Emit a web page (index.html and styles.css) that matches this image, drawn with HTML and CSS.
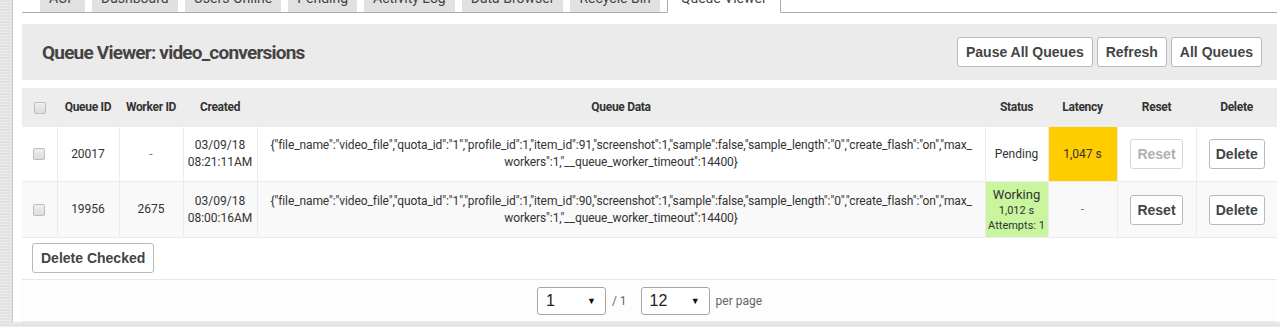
FILE: index.html
```html
<!DOCTYPE html>
<html lang="en">
<head>
    <meta charset="UTF-8">
    <meta name="viewport" content="width=device-width, initial-scale=1.0">
    <title>Queue Viewer</title>
    <link rel="stylesheet" href="styles.css">
</head>
<body>
    <div class="page">
        <ul class="tabs">
            <li><a href="#">ACP</a></li>
            <li><a href="#">Dashboard</a></li>
            <li><a href="#">Users Online</a></li>
            <li><a href="#">Pending</a></li>
            <li><a href="#">Activity Log</a></li>
            <li><a href="#">Data Browser</a></li>
            <li><a href="#">Recycle Bin</a></li>
            <li class="active"><a href="#">Queue Viewer</a></li>
        </ul>

        <div class="panel-heading">
            <h2>Queue Viewer: video_conversions</h2>
            <div class="actions">
                <button class="btn">Pause All Queues</button>
                <button class="btn">Refresh</button>
                <button class="btn">All Queues</button>
            </div>
        </div>

        <table class="queue">
            <colgroup>
                <col class="col-check">
                <col class="col-id">
                <col class="col-worker">
                <col class="col-created">
                <col>
                <col class="col-status">
                <col class="col-latency">
                <col class="col-reset">
                <col class="col-delete">
            </colgroup>
            <thead>
                <tr>
                    <th><input type="checkbox" class="check"></th>
                    <th>Queue ID</th>
                    <th>Worker ID</th>
                    <th>Created</th>
                    <th>Queue Data</th>
                    <th>Status</th>
                    <th>Latency</th>
                    <th>Reset</th>
                    <th>Delete</th>
                </tr>
            </thead>
            <tbody>
                <tr>
                    <td><input type="checkbox" class="check"></td>
                    <td>20017</td>
                    <td class="muted">-</td>
                    <td>03/09/18<br>08:21:11AM</td>
                    <td class="data">{"file_name":"video_file","quota_id":"1","profile_id":1,"item_id":91,"screenshot":1,"sample":false,"sample_length":"0","create_flash":"on","max_<br>workers":1,"__queue_worker_timeout":14400}</td>
                    <td>Pending</td>
                    <td class="late">1,047 s</td>
                    <td><button class="btn" disabled>Reset</button></td>
                    <td><button class="btn">Delete</button></td>
                </tr>
                <tr class="alt">
                    <td><input type="checkbox" class="check"></td>
                    <td>19956</td>
                    <td>2675</td>
                    <td>03/09/18<br>08:00:16AM</td>
                    <td class="data">{"file_name":"video_file","quota_id":"1","profile_id":1,"item_id":90,"screenshot":1,"sample":false,"sample_length":"0","create_flash":"on","max_<br>workers":1,"__queue_worker_timeout":14400}</td>
                    <td class="working">
                        <div>Working</div>
                        <div class="small">1,012 s</div>
                        <div class="small">Attempts: 1</div>
                    </td>
                    <td class="muted">-</td>
                    <td><button class="btn">Reset</button></td>
                    <td><button class="btn">Delete</button></td>
                </tr>
            </tbody>
        </table>

        <div class="bulk">
            <button class="btn">Delete Checked</button>
        </div>

        <div class="pager">
            <span class="select">1</span>
            <span class="of">/ 1</span>
            <span class="select">12</span>
            <span class="of">per page</span>
        </div>
    </div>
</body>
</html>
```

FILE: styles.css
```css
html, body {
    height: 100%;
}

body {
    margin: 0;
    overflow: hidden;
    font-family: Roboto, "Liberation Sans", sans-serif;
    color: #333;
    background-color: #e2e2e2;
    background-image: repeating-linear-gradient(0deg, rgba(255,255,255,0.35) 0 1px, transparent 1px 3px);
}

.page {
    margin-left: 12px;
    border-left: 1px solid #c6c6c6;
    background: #fff;
    padding: 0 3px 0 9px;
    min-height: 100%;
}

/* tabs */
.tabs {
    display: flex;
    gap: 7px;
    list-style: none;
    margin: -17px 0 0;
    padding: 0 0 0 18px;
    border-bottom: 1px solid #a9a9a9;
}

.tabs li a {
    display: block;
    padding: 7px 9px 6px;
    font-size: 14px;
    line-height: 16px;
    color: #444;
    text-decoration: none;
    background: #e1e1e1;
}

.tabs li.active {
    margin-bottom: -1px;
}

.tabs li.active a {
    background: #fff;
    border: 1px solid #a9a9a9;
    border-bottom: 1px solid #fff;
    border-top: none;
    padding: 7px 13px 6px;
}

/* heading */
.panel-heading {
    display: flex;
    align-items: center;
    justify-content: space-between;
    height: 56px;
    margin-top: 11px;
    padding: 0 15px 0 20px;
    background: #ebebeb;
}

.panel-heading h2 {
    margin: 0;
    font-size: 19px;
    font-weight: bold;
    letter-spacing: -0.8px;
    color: #444;
}

.actions {
    display: flex;
    gap: 4px;
}

.btn {
    font-family: "Liberation Sans", Arial, sans-serif;
    font-size: 14px;
    font-weight: bold;
    line-height: 16px;
    color: #444;
    background: #fff;
    border: 1px solid #b9b9b9;
    border-radius: 3px;
    padding: 6px 8px;
    cursor: pointer;
}

.btn:disabled {
    color: #b0b0b0;
    border-color: #d6d6d6;
    cursor: default;
}

/* table */
.queue {
    width: 100%;
    margin-top: 8px;
    border-collapse: collapse;
    table-layout: fixed;
    font-size: 12px;
}

.col-check { width: 35px; }
.col-id { width: 62px; }
.col-worker { width: 64px; }
.col-created { width: 74px; }
.col-status { width: 63px; }
.col-latency { width: 69px; }
.col-reset { width: 79px; }
.col-delete { width: 81px; }

.queue th {
    height: 38px;
    padding: 0 4px;
    background: #ededed;
    font-weight: bold;
    letter-spacing: -0.3px;
    color: #333;
    text-align: center;
    white-space: nowrap;
}

.queue td {
    padding: 10px 4px;
    line-height: 17px;
    text-align: center;
    border-left: 1px solid #ececec;
    border-top: 1px solid #ececec;
}

.queue td:first-child {
    border-left: none;
}

.queue tr.alt td {
    background: #f9f9f9;
}

.queue .btn {
    padding: 6px 6px;
}

.queue td.data {
    padding: 10px 13px;
    letter-spacing: -0.1px;
    color: #333;
}

.queue td.muted {
    color: #777;
}

.queue td.late {
    background: #ffcc00;
}

.queue tr.alt td.working {
    background: #c8f59e;
    padding: 5px 2px 4px;
    font-size: 13px;
    line-height: 16px;
    white-space: nowrap;
}

.working .small {
    font-size: 11px;
    line-height: 15px;
}

.check {
    appearance: none;
    width: 12px;
    height: 12px;
    margin: 0;
    vertical-align: middle;
    border: 1px solid #bdbdbd;
    border-radius: 2px;
    background: linear-gradient(#f0f0f0, #dcdcdc);
}

/* footer */
.bulk {
    padding: 5px 10px 6px;
    border-top: 1px solid #ececec;
    border-bottom: 1px solid #e8e8e8;
}

.pager {
    display: flex;
    justify-content: center;
    align-items: center;
    gap: 6px;
    padding: 7px 0 6px;
    background: #fdfdfd;
    border-bottom: 1px solid #ececec;
    font-size: 12px;
    color: #666;
}

.select {
    position: relative;
    box-sizing: border-box;
    width: 69px;
    height: 28px;
    padding: 4px 8px;
    font-family: "Liberation Sans", Arial, sans-serif;
    font-size: 16px;
    line-height: 18px;
    color: #222;
    border: 1px solid #a6a6a6;
    border-radius: 3px;
    background: #fff;
}

.select::after {
    content: "\25BC";
    position: absolute;
    right: 9px;
    top: 7px;
    font-size: 9px;
    line-height: 12px;
    color: #111;
}

.of {
    margin-right: 8px;
}

.of:last-child {
    margin-right: 0;
}
```
